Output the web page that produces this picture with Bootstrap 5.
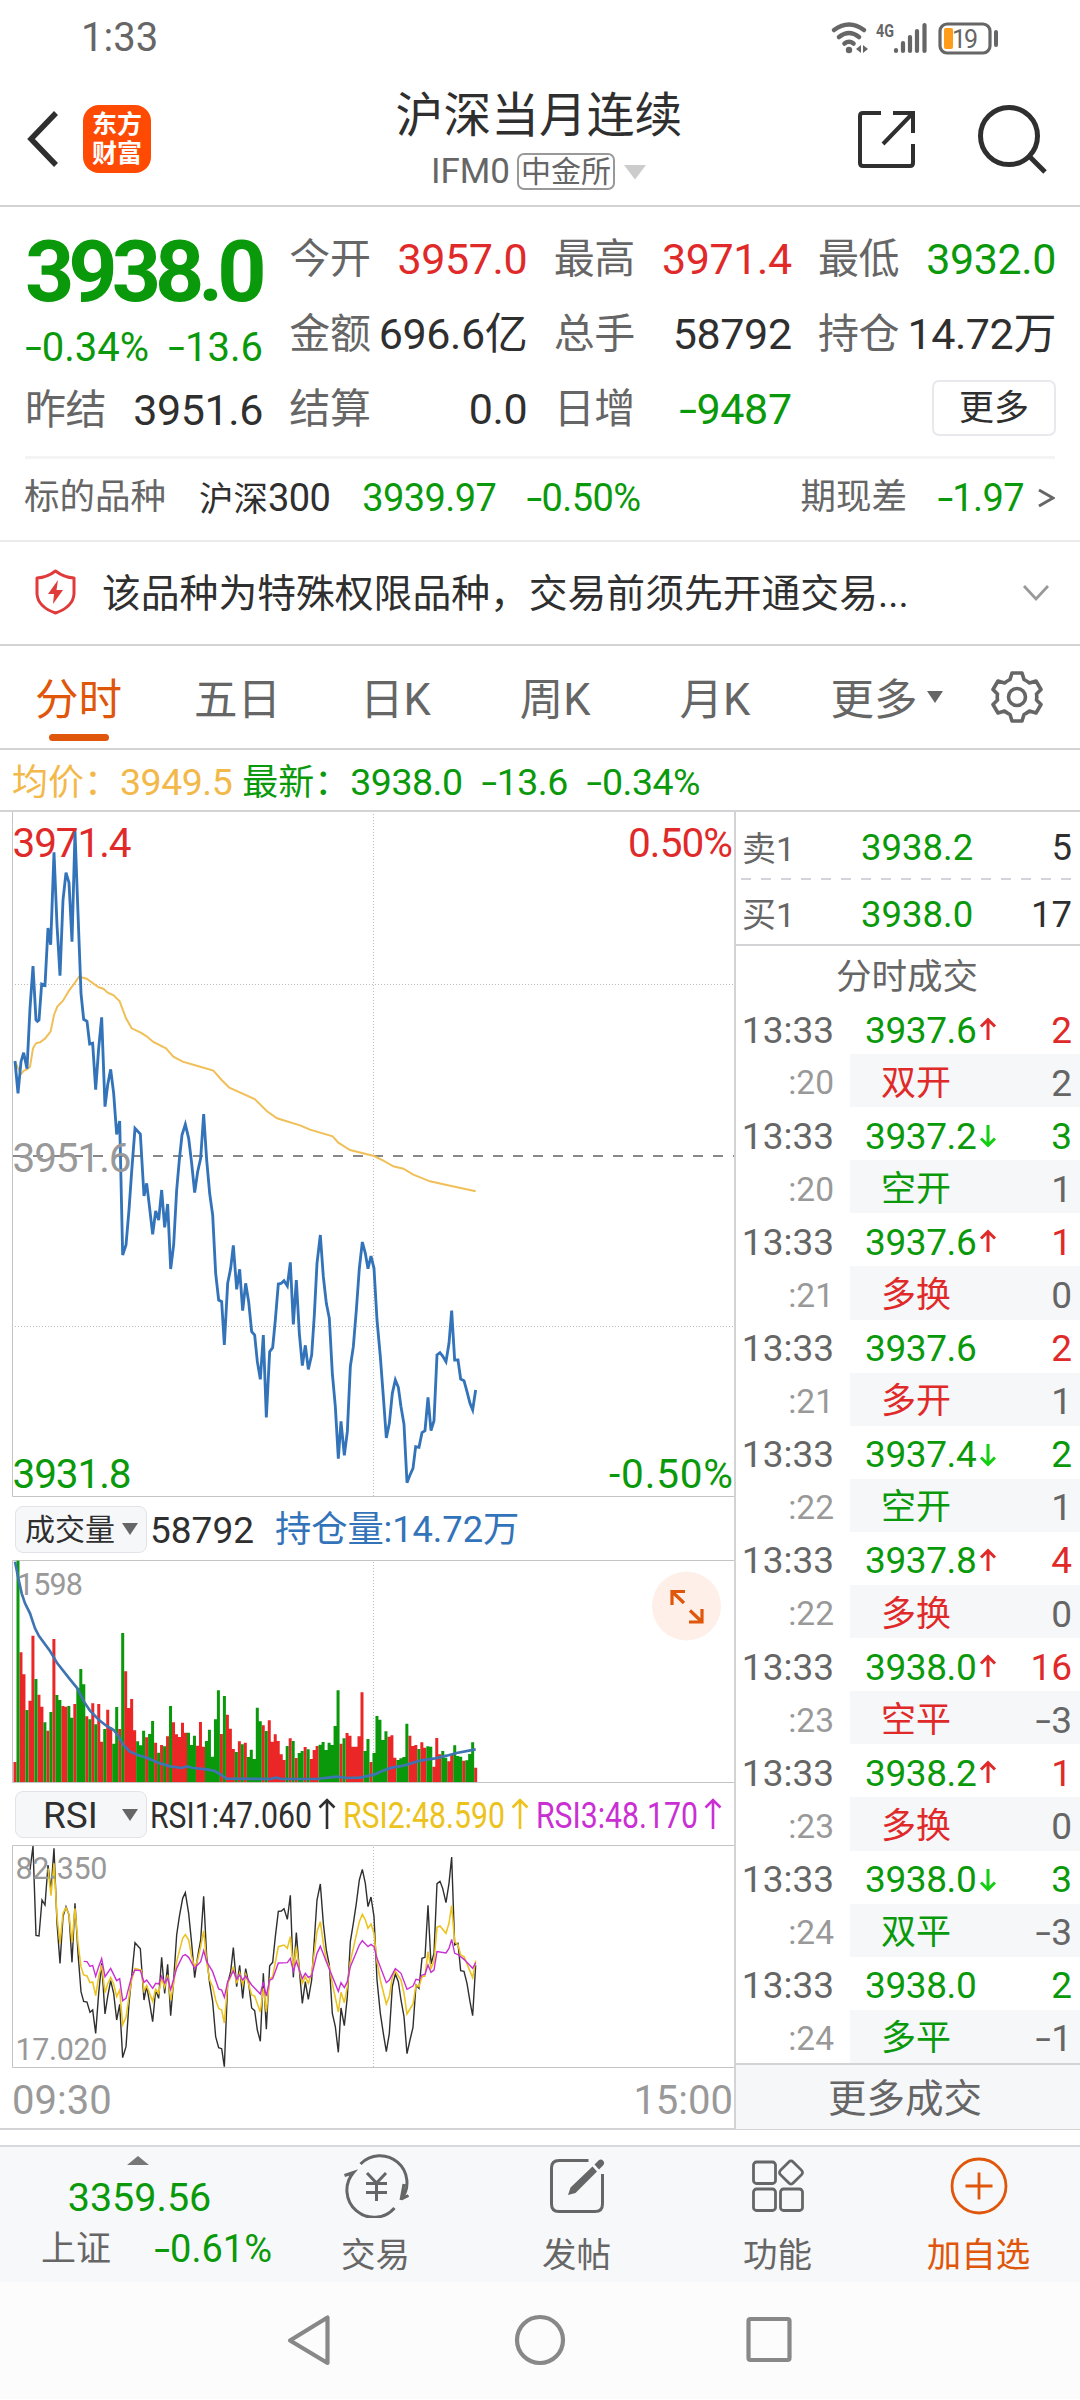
<!DOCTYPE html>
<html lang="zh-CN">
<head>
<meta charset="utf-8">
<title>沪深当月连续 IFM0</title>
<meta name="viewport" content="width=1080">
<link href="https://cdn.jsdelivr.net/npm/bootstrap@5.3.0/dist/css/bootstrap.min.css" rel="stylesheet">
<style>
:root{--up:#e02a2a;--down:#0a990a;--ink:#2f2f2f;--dim:#666;--pale:#999;--brand:#e0560a;--blue:#3373b9;--rule:#d3d3d6;--soft:#f6f7f9}
body{width:1080px;height:2400px;margin:0;background:#fff;color:var(--ink);font-family:Roboto,"Noto Sans CJK SC",sans-serif;line-height:1;overflow:hidden}
svg{display:block;flex:none}
svg text{font-family:Roboto,"Noto Sans CJK SC",sans-serif}
.c-up{color:var(--up)}.c-down{color:var(--down)}.c-dim{color:var(--dim)}.c-pale{color:var(--pale)}.c-brand{color:var(--brand)}.c-blue{color:var(--blue)}
.rule-b{border-bottom:2px solid var(--rule)}
.ng{display:inline-block;font-style:normal;transform:scaleX(1.5);margin:0 .07em}
.statusbar{height:70px;padding:6px 46px 0 81px;font-size:40px}
.titlebar{height:137px;padding:2px 33px 0 25px}
.brand-tile{width:68px;height:68px;border-radius:16px;background:#ff4a03;color:#fff;font-size:25px;font-weight:700;line-height:29px;margin-left:25px;padding-top:1px}
.title-main{font-size:47.8px;height:66px;line-height:63px}
.title-sub{font-size:35px;height:42px}
.exch{font-size:30px;border:2px solid #999;border-radius:7px;height:37px;padding:0 2px;margin-left:7px;line-height:33px}
.quote{height:249px;padding:15px 24px 0 25px}
.qcol{width:238px}
.qcell{height:75px;font-size:43px;letter-spacing:-.4px}
.qcell .lab{font-size:41px;color:var(--dim)}
.bigprice{height:100px;font-size:86px;font-weight:700;letter-spacing:-6px}
.delta{height:51px;font-size:40px}
.more-btn{width:124px;height:56px;border:2px solid #e7e9ec;border-radius:7px;font-size:35px;color:var(--ink);padding:0;margin-top:-3px}
.under{height:84px;margin:0 25px;border-top:3px solid #f4f4f5;font-size:38px;padding-bottom:3px;letter-spacing:-.6px}
.under .cn{font-size:35.5px;letter-spacing:0}
.notice{height:106px;padding:0 30px 0 35px;border-top:2px solid #ebebed;font-size:38.8px}
.tabs{height:104px;font-size:43.5px;color:var(--dim)}
.tabs .tab-i{position:relative;height:104px;padding-top:7px}
.tab-i.on{color:var(--brand)}
.tab-i.on::after{content:"";position:absolute;left:14px;width:60px;top:89px;height:7px;border-radius:4px;background:var(--brand)}
.avgline{height:62px;padding:5px 0 0 12px;font-size:37.5px;letter-spacing:-.5px}
.avgline .cn{font-size:36px;letter-spacing:0}
.charts{width:734px}
.pane-head{padding-left:15px}
.pill{width:132px;height:47px;background:#f6f7f9;border:1.5px solid #e1e3e8;border-radius:8px;padding:0 8px 0 9px;margin-top:1px}
.side{width:346px;border-left:2px solid var(--rule)}
.book{font-size:36.5px;height:66px;padding:0 8px 0 6px}
.book .cn{font-size:34px;width:119px}
.dash{height:2px;margin:0 8px 0 5px;background:repeating-linear-gradient(90deg,#d3d3d9 0 10px,transparent 10px 20px)}
.tick{height:53.1px;font-size:37px}
.tick .tm{width:114px;padding:5px 16px 0 0}
.tick .px{width:230px;height:53.1px;padding:5px 8px 0 15px}
.tick .val{letter-spacing:-.4px;margin-right:3px}
.tick.sub .px{background:var(--soft);padding-left:31px}
.tick.sub .tm{font-size:33.5px}
.tick.sub .cn{font-size:35px}
.more-trades{height:66px;background:var(--soft);border-top:2px solid var(--rule);font-size:38.5px;padding:4px 6px 0 0}
.dock{height:137px;background:#f7f8fa;border-top:2px solid #d5d8dc}
.dock-i{width:201px;font-size:34.5px}
.nav-sys{height:117px;background:#fcfcfc}
</style>
<script src="https://cdn.jsdelivr.net/npm/bootstrap@5.3.0/dist/js/bootstrap.bundle.min.js"></script>
</head>
<body class="d-flex flex-column">

<div class="statusbar d-flex align-items-center justify-content-between c-dim">
  <span>1:33</span>
  <svg width="204" height="64" viewBox="830 4 204 64" fill="none" stroke="#666">
    <g stroke-width="4.6" stroke-linecap="round"><path d="M834 28Q849 17 864 28M839 35Q849 27 859 35M844.500 41.500Q849 38 853.500 41.500"/></g>
    <circle cx="849" cy="48" r="3.200" fill="#666" stroke="none"/>
    <path d="M861 43v8l-5-4zM863 43v8l5-4z" fill="#666" stroke="none"/>
    <text x="876" y="34.500" font-size="18" font-weight="700" fill="#666" stroke="none" textLength="18" lengthAdjust="spacingAndGlyphs">4G</text>
    <path stroke-width="4.200" stroke-linecap="round" d="M896 48v1M903 41v8M910 35v14M917 29v20M924.500 23v26"/>
    <rect x="940" y="22" width="50" height="29" rx="7" stroke-width="3.200"/>
    <rect x="944" y="26" width="9" height="21" rx="2" fill="#ff9c1a" stroke="none"/>
    <text x="952" y="45.500" font-size="25" fill="#666" stroke="none" textLength="26">19</text>
    <path stroke-width="4" stroke-linecap="round" d="M996 30v13"/>
  </svg>
</div>

<div class="titlebar rule-b d-flex align-items-center justify-content-between">
  <div class="d-flex align-items-center" style="width:260px">
    <svg width="33" height="58" viewBox="0 0 33 58" fill="none" stroke="#2f2f2f" stroke-width="5.500"><path d="M31 3L6 29L31 55"/></svg>
    <div class="brand-tile d-flex flex-column align-items-center justify-content-center"><span>东方</span><span>财富</span></div>
  </div>
  <div class="d-flex flex-column align-items-center">
    <div class="title-main">沪深当月连续</div>
    <div class="title-sub d-flex align-items-center c-dim"><span>IFM0</span><span class="exch">中金所</span>
      <svg class="ms-2" width="24" height="16" viewBox="0 0 24 16"><path d="M1 1H23L12 15.500z" fill="#ccc"/></svg></div>
  </div>
  <div class="d-flex align-items-center justify-content-end" style="width:254px">
    <svg width="190" height="76" viewBox="857 101 190 76" fill="none" stroke="#2f2f2f" stroke-width="4">
      <path d="M881 113H863Q860 113 860 116V163Q860 166 863 166H910Q913 166 913 163V144M893 113H913V133M912 114L883 144"/>
      <circle cx="1009" cy="136" r="28.500" stroke-width="5"/><path stroke-width="5" d="M1029 156L1045 172"/>
    </svg>
  </div>
</div>

<div class="quote d-flex justify-content-between">
  <div class="qcol">
    <div class="bigprice d-flex align-items-center c-down">3938.0</div>
    <div class="delta d-flex align-items-center justify-content-between c-down"><span><i class="ng">-</i>0.34%</span><span><i class="ng">-</i>13.6</span></div>
    <div class="qcell d-flex align-items-center justify-content-between"><span class="lab">昨结</span><span>3951.6</span></div>
  </div>
  <div class="qcol">
    <div class="qcell d-flex align-items-center justify-content-between"><span class="lab">今开</span><span class="c-up">3957.0</span></div>
    <div class="qcell d-flex align-items-center justify-content-between"><span class="lab">金额</span><span>696.6亿</span></div>
    <div class="qcell d-flex align-items-center justify-content-between"><span class="lab">结算</span><span>0.0</span></div>
  </div>
  <div class="qcol">
    <div class="qcell d-flex align-items-center justify-content-between"><span class="lab">最高</span><span class="c-up">3971.4</span></div>
    <div class="qcell d-flex align-items-center justify-content-between"><span class="lab">总手</span><span>58792</span></div>
    <div class="qcell d-flex align-items-center justify-content-between"><span class="lab">日增</span><span class="c-down"><i class="ng">-</i>9487</span></div>
  </div>
  <div class="qcol">
    <div class="qcell d-flex align-items-center justify-content-between"><span class="lab">最低</span><span class="c-down">3932.0</span></div>
    <div class="qcell d-flex align-items-center justify-content-between"><span class="lab">持仓</span><span>14.72万</span></div>
    <div class="qcell d-flex align-items-center justify-content-end"><button class="btn more-btn lh-1">更多</button></div>
  </div>
</div>

<div class="under d-flex align-items-center">
  <span class="cn c-dim" style="margin-left:-1px">标的品种</span>
  <span style="margin-left:33px"><span class="cn" style="font-size:34.500px">沪深</span>300</span>
  <span class="c-down" style="margin-left:32px">3939.97</span>
  <span class="c-down" style="margin-left:30px"><i class="ng">-</i>0.50%</span>
  <span class="cn c-dim ms-auto">期现差</span>
  <span class="c-down" style="margin-left:30px"><i class="ng">-</i>1.97</span>
  <svg style="margin-left:13px" width="18" height="26" viewBox="0 0 18 26" fill="none" stroke="#666" stroke-width="3"><path d="M2 5L16 13L2 21"/></svg>
</div>

<div class="notice rule-b d-flex align-items-center">
  <svg style="margin-bottom:2px" width="41" height="46" viewBox="0 0 41 46" fill="none" stroke="#e03a3a" stroke-width="3"><path d="M20.500 2Q29 8.500 39 9V25Q38 38 20.500 44Q3 38 2 25V9Q12 8.500 20.500 2Z" stroke-linejoin="round"/><path d="M23 11L13 25H19L18 35L28 21H21.500Z" fill="#e03a3a" stroke="none"/></svg>
  <span style="margin-left:26px;padding-top:2px">该品种为特殊权限品种，交易前须先开通交易...</span>
  <svg class="ms-auto" width="28" height="18" viewBox="0 0 28 18" fill="none" stroke="#999" stroke-width="2.800"><path d="M2 2L14 15L26 2"/></svg>
</div>

<div class="tabs rule-b d-flex align-items-center">
  <div class="tab-i on d-flex align-items-center" style="margin-left:35px">分时</div>
  <div class="tab-i d-flex align-items-center" style="margin-left:72px">五日</div>
  <div class="tab-i d-flex align-items-center" style="margin-left:79px">日K</div>
  <div class="tab-i d-flex align-items-center" style="margin-left:89px">周K</div>
  <div class="tab-i d-flex align-items-center" style="margin-left:89px">月K</div>
  <div class="tab-i d-flex align-items-center" style="margin-left:80px">更多<svg style="margin:0 0 7px 10px" width="16" height="12" viewBox="0 0 16 12"><path d="M0 0H16L8 12z" fill="#666"/></svg></div>
  <svg style="margin-left:46px" width="56" height="56" viewBox="-28 -28 56 56" fill="none" stroke="#666" stroke-width="3.600" stroke-linejoin="round"><path d="M-5 -24H5L7 -17.500Q10 -16 12.500 -14L19 -16L24 -7.500L19.500 -3Q20 0 19.500 3L24 7.500L19 16L12.500 14Q10 16 7 17.500L5 24H-5L-7 17.500Q-10 16 -12.500 14L-19 16L-24 7.500L-19.500 3Q-20 0 -19.500 -3L-24 -7.500L-19 -16L-12.500 -14Q-10 -16 -7 -17.500Z"/><circle r="8.500"/></svg>
</div>

<div class="avgline rule-b d-flex align-items-center">
  <span class="cn" style="color:#f2b94a">均价：</span><span style="color:#f2b94a;margin-left:0">3949.5</span>
  <span class="cn c-down" style="margin-left:10px">最新：</span><span class="c-down">3938.0</span>
  <span class="c-down" style="margin-left:19px"><i class="ng">-</i>13.6</span>
  <span class="c-down" style="margin-left:19px"><i class="ng">-</i>0.34%</span>
</div>

<div class="d-flex rule-b" style="height:1318px">
  <div class="charts">
    <svg width="734" height="685" viewBox="0 812 734 685" fill="none">
      <path d="M12.500 812V1496.500H734" stroke="#c4c4c4"/>
      <path d="M373.500 814V1496M15 984.500H734M15 1326.500H734" stroke="#bbb" stroke-dasharray="1 2"/>
      <path d="M13 1156H734" stroke="#888" stroke-width="2" stroke-dasharray="10 10"/>
      <g font-size="40.500">
        <text x="12.500" y="856.500" fill="#e02a2a" textLength="119">3971.4</text>
        <text x="628" y="856.500" fill="#e02a2a" textLength="105">0.50%</text>
        <text x="12.500" y="1487.500" fill="#0a990a" textLength="119">3931.8</text>
        <text x="609" y="1487.500" fill="#0a990a" textLength="124">-0.50%</text>
      </g>
      <g transform="translate(0 800) scale(.33333)">
        <polyline stroke="#f0bf58" stroke-width="6" points="45,785 63,822 72,812 81,808 90,800 99,745 108,730 120,727 135,716 152,694 162,645 172,620 189,602 207,572 225,548 237,530 260,536 296,562 310,566 323,578 341,586 359,604 378,655 395,685 421,697 440,709 460,726 498,745 520,770 548,785 593,798 640,812 665,840 688,863 764,897 800,933 831,955 900,976 930,989 998,1009 1015,1028 1050,1050 1122,1068 1150,1082 1180,1099 1210,1106 1240,1124 1290,1144 1340,1155 1427,1174"/>
        <polyline stroke="#3373b9" stroke-width="8.500" points="45,783 54,880 63,785 71,758 81,806 90,625 99,498 108,660 112,664 117,660 125,552 135,556 144,384 152,434 162,157 171,375 180,527 189,300 198,218 207,248 216,425 225,95 234,340 243,580 251,658 261,664 269,732 278,730 287,869 296,745 305,652 315,920 323,855 332,808 341,880 350,1003 359,963 368,1365 378,1335 387,1230 395,1115 405,985 421,1002 432,1188 440,1150 449,1225 458,1303 467,1233 476,1260 485,1170 494,1282 503,1212 512,1407 521,1335 530,1170 538,1080 546,1005 556,973 566,1015 575,1090 584,1178 593,1115 602,1075 611,942 620,1080 629,1180 638,1245 647,1420 656,1500 665,1505 673,1635 683,1450 692,1405 700,1336 710,1468 719,1408 728,1532 737,1450 746,1505 755,1595 764,1605 772,1685 781,1738 790,1605 799,1852 809,1655 818,1643 826,1560 835,1452 844,1450 852,1442 862,1458 871,1387 880,1573 889,1440 898,1600 907,1697 916,1636 925,1708 935,1665 943,1545 951,1390 961,1305 970,1430 979,1510 988,1555 997,1720 1006,1820 1015,1976 1023,1864 1033,1966 1042,1895 1051,1700 1060,1640 1069,1530 1078,1405 1087,1326 1096,1360 1104,1406 1113,1368 1122,1405 1131,1560 1141,1670 1150,1790 1159,1914 1168,1870 1177,1780 1186,1740 1195,1762 1203,1820 1212,1873 1221,2048 1230,2025 1239,2005 1247,1940 1257,1942 1266,1898 1275,1892 1284,1792 1293,1892 1302,1862 1311,1665 1320,1658 1328,1668 1338,1685 1347,1630 1355,1532 1364,1680 1374,1680 1382,1737 1392,1742 1401,1775 1410,1810 1418,1830 1427,1770"/>
      </g>
      <text x="12.500" y="1171.500" fill="#999" font-size="40.500" textLength="119">3951.6</text>
    </svg>

    <div class="pane-head d-flex align-items-center" style="height:63px">
      <div class="pill d-flex align-items-center justify-content-between"><span style="font-size:30px;padding-top:2px">成交量</span><svg width="16" height="12" viewBox="0 0 16 12"><path d="M0 0H16L8 12z" fill="#666"/></svg></div>
      <span style="font-size:37px;margin-left:3px;padding-top:3px">58792</span>
      <span class="c-blue" style="font-size:36.300px;margin-left:21px;padding-top:3px;letter-spacing:-.1px">持仓量:14.72万</span>
    </div>

    <svg width="734" height="223" viewBox="0 1560 734 223" fill="none">
      <path d="M734 1560.500H12.500V1782.500H734" stroke="#c4c4c4"/>
      <path d="M373.500 1562V1782" stroke="#bbb" stroke-dasharray="1 2"/>
      <g transform="translate(0 1490) scale(.33333)">
        <path id="volUp" stroke="#ea2626" stroke-width="9"/>
        <path id="volDown" stroke="#0a990a" stroke-width="9"/>
      </g>
      <text x="17" y="1594.500" fill="#999" font-size="30.500" textLength="66">1598</text>
      <polyline transform="translate(0 1490) scale(.33333)" stroke="#3f74b3" stroke-width="8" points="45,215 55,265 65,310 75,340 90,370 105,415 117,438 150,483 172,520 210,568 232,595 252,635 270,662 297,690 320,708 341,720 355,738 370,765 390,785 415,796 440,803 475,818 510,829 545,834 560,829 580,834 620,838 645,843 660,852 680,866 810,867 828,863 845,867 950,867 1010,860 1040,864 1080,863 1122,854 1145,844 1175,833 1210,827 1260,812 1305,805 1340,797 1370,789 1427,778"/>
      <circle cx="686.500" cy="1606" r="34.500" fill="#fef0e9"/>
      <path stroke="#e0560a" stroke-width="3.200" d="M685 1591.500H672V1605M672.500 1592L684 1603M689 1622H702V1609M701.500 1621.500L690 1610.500"/>
    </svg>

    <div class="pane-head d-flex align-items-center" style="height:62px">
      <div class="pill d-flex align-items-center justify-content-between" style="padding-left:27px"><span style="font-size:37px;padding-top:1px">RSI</span><svg width="16" height="12" viewBox="0 0 16 12"><path d="M0 0H16L8 12z" fill="#666"/></svg></div>
      <svg style="margin-left:1px;overflow:visible" width="586" height="62" viewBox="148 1783 586 62" font-size="37.500">
        <text x="150" y="1827.500" fill="#2f2f2f" textLength="162" lengthAdjust="spacingAndGlyphs">RSI1:47.060</text>
        <text x="343" y="1827.500" fill="#ecc21c" textLength="162" lengthAdjust="spacingAndGlyphs">RSI2:48.590</text>
        <text x="536" y="1827.500" fill="#c92fd3" textLength="162" lengthAdjust="spacingAndGlyphs">RSI3:48.170</text>
        <g fill="none" stroke-width="2.600"><path stroke="#2f2f2f" d="M327 1829V1800M319.500 1807.500L327 1800L334.500 1807.500"/><path stroke="#ecc21c" d="M520 1829V1800M512.500 1807.500L520 1800L527.500 1807.500"/><path stroke="#c92fd3" d="M713 1829V1800M705.500 1807.500L713 1800L720.500 1807.500"/></g>
      </svg>
    </div>

    <svg width="734" height="223" viewBox="0 1845 734 223" fill="none">
      <path d="M734 1845.500H12.500V2067.500H734" stroke="#c4c4c4"/>
      <path d="M373.500 1847V2067" stroke="#bbb" stroke-dasharray="1 2"/>
      <g transform="translate(0 1780) scale(.33333)" stroke-width="4.200">
        <polyline stroke="#2f2f2f" points="90,270 99,198 108,466 117,468 126,360 135,375 144,255 153,330 162,205 171,430 180,550 189,410 198,380 207,405 216,547 225,370 234,520 243,635 251,664 261,666 270,697 278,690 287,760 296,640 305,550 315,702 323,650 332,602 341,640 350,720 359,673 368,833 378,800 387,670 395,590 405,488 421,506 432,660 440,618 449,670 458,725 467,630 476,655 485,532 494,640 503,553 512,707 521,600 530,465 538,410 548,355 556,338 566,400 575,490 584,593 593,530 602,480 611,349 620,530 629,610 638,665 647,770 656,803 665,806 673,860 683,610 692,575 700,503 710,620 719,556 728,655 737,566 746,610 755,684 764,692 772,750 781,784 790,580 799,748 809,557 818,547 826,470 835,394 844,393 852,386 862,418 871,346 880,592 889,458 898,570 907,670 916,605 925,658 935,600 943,480 951,360 961,312 970,430 979,510 988,555 997,700 1006,740 1015,817 1023,684 1033,737 1042,650 1051,485 1060,430 1069,370 1078,300 1087,268 1096,310 1104,380 1113,351 1122,410 1131,600 1141,700 1150,760 1159,815 1168,760 1177,620 1186,582 1195,605 1203,660 1212,710 1221,821 1230,780 1239,742 1248,615 1257,625 1266,535 1275,532 1284,376 1293,552 1302,520 1311,311 1320,304 1328,325 1338,368 1347,310 1355,231 1364,495 1374,490 1382,572 1392,574 1401,610 1410,665 1418,707 1427,556"/>
        <polyline stroke="#ecc21c" stroke-width="4.600" points="144,265 153,347 162,250 171,410 180,490 189,400 198,383 207,403 216,487 225,385 234,490 243,560 251,585 261,588 270,608 278,606 287,647 296,590 305,556 315,638 323,612 332,592 341,612 350,650 359,630 368,734 378,712 387,650 395,600 405,565 424,570 432,632 440,617 458,664 467,628 476,640 485,595 494,622 503,585 512,661 521,610 530,545 548,475 556,464 566,480 575,530 584,562 593,540 602,500 611,452 620,545 629,600 638,620 647,660 656,685 665,690 673,729 683,610 692,590 700,560 710,610 719,578 728,614 737,583 755,645 764,648 781,696 790,625 799,696 809,598 818,590 835,500 852,495 862,505 871,470 880,565 889,500 898,570 907,610 916,590 925,610 935,580 951,455 961,425 970,490 979,540 988,560 997,610 1015,696 1023,637 1033,668 1042,620 1051,545 1078,425 1087,403 1096,420 1104,445 1113,432 1122,460 1131,545 1141,600 1159,672 1168,650 1177,590 1186,574 1203,600 1212,640 1221,702 1239,672 1248,615 1257,620 1266,590 1275,588 1284,515 1293,565 1302,545 1311,442 1320,438 1338,460 1347,430 1355,377 1364,485 1374,495 1382,525 1392,530 1418,593 1427,542"/>
        <polyline stroke="#c92fd3" points="251,544 261,545 270,559 278,556 287,589 296,560 305,536 315,590 332,565 350,602 359,596 368,662 378,655 387,620 395,590 405,570 421,572 432,607 440,600 458,625 467,610 476,612 485,589 494,610 503,595 512,629 530,565 548,528 556,524 566,532 584,565 602,545 611,512 620,545 638,575 656,627 665,630 673,652 683,605 700,573 710,598 719,585 728,600 737,588 755,615 781,642 790,606 799,648 809,600 818,596 835,549 862,548 871,535 880,574 889,544 907,596 916,580 925,592 935,587 951,520 961,499 979,545 1015,634 1023,608 1033,623 1042,605 1051,560 1078,495 1087,482 1104,500 1113,493 1122,500 1131,535 1159,608 1168,600 1186,566 1203,580 1221,628 1239,618 1248,598 1257,600 1266,585 1275,583 1284,555 1293,577 1302,570 1311,515 1338,519 1347,505 1355,478 1364,520 1374,524 1392,538 1418,565 1427,548"/>
      </g>
      <g fill="#999" font-size="30.500"><text x="15.500" y="1879" textLength="92">82.350</text><text x="15.500" y="2060" textLength="92">17.020</text></g>
    </svg>

    <div class="d-flex justify-content-between align-items-center c-pale" style="height:60px;padding:6px 1px 0 12px;font-size:40px"><span>09:30</span><span>15:00</span></div>
  </div>

  <div class="side">
    <div class="book d-flex align-items-center" style="padding-top:7px"><span class="cn c-dim">卖1</span><span class="c-down">3938.2</span><span class="ms-auto">5</span></div>
    <div class="dash"></div>
    <div class="book d-flex align-items-center rule-b" style="padding-top:6px"><span class="cn c-dim">买1</span><span class="c-down">3938.0</span><span class="ms-auto">17</span></div>
    <div class="d-flex align-items-center justify-content-center c-dim" style="height:55px;font-size:35.500px;padding:8px 2px 0 0">分时成交</div>
    <div id="ticks"></div>
    <div class="more-trades d-flex align-items-center justify-content-center c-dim">更多成交</div>
  </div>
</div>

<div style="height:15px"></div>

<div class="dock d-flex">
  <div class="d-flex flex-column" style="width:276px">
    <div class="d-flex justify-content-center" style="height:22px;padding-top:9px"><svg width="22" height="9" viewBox="0 0 22 9"><path d="M0 9L11 0L22 9z" fill="#777"/></svg></div>
    <div class="d-flex align-items-center justify-content-center c-down" style="height:58px;font-size:39.500px;padding-left:3px">3359.56</div>
    <div class="d-flex align-items-center justify-content-between" style="height:44px;padding:0 4px 0 41px"><span class="c-dim" style="font-size:35px">上证</span><span class="c-down" style="font-size:38px"><i class="ng">-</i>0.61%</span></div>
  </div>
  <div class="dock-i d-flex flex-column align-items-center c-dim">
    <svg style="margin:7px 2px 0 0" width="70" height="64" viewBox="340 2154 70 64" fill="none" stroke="#666" stroke-width="3"><path d="M359.500 2164A27 27 0 0 1 400.500 2199L407.500 2195.500M400 2200L403 2184M393.500 2208A27 27 0 0 1 352.500 2172.500L343.500 2175.500"/><path d="M366 2173L375.500 2183L385 2173M365 2183.500H386M365 2192.500H386M375.500 2182V2201"/></svg>
    <span style="margin:20px 2px 0 0">交易</span>
  </div>
  <div class="dock-i d-flex flex-column align-items-center c-dim">
    <svg style="margin:7px 1px 0 0" width="64" height="64" viewBox="545 2154 64 64" fill="none" stroke="#666" stroke-width="3"><path d="M588.500 2160.500H559Q551.500 2160.500 551.500 2168V2204Q551.500 2211.500 559 2211.500H595Q602.500 2211.500 602.500 2204V2174"/><path stroke="none" fill="#666" d="M568 2195L570.500 2187.500L592.500 2166.500L597 2171.500L575.500 2193ZM594.500 2164.500L598.500 2160.500Q601 2158.500 603.200 2160.700Q605.200 2163 603 2165.500L599 2169.500Z"/></svg>
    <span style="margin:20px 2px 0 0">发帖</span>
  </div>
  <div class="dock-i d-flex flex-column align-items-center c-dim">
    <svg style="margin:7px 1px 0 0" width="64" height="64" viewBox="746.500 2154 64 64" fill="none" stroke="#666" stroke-width="2.800"><rect x="754" y="2162" width="22" height="21.500" rx="3"/><rect x="754" y="2189" width="22" height="21.500" rx="3"/><rect x="781" y="2189" width="22" height="21.500" rx="3"/><rect x="782.500" y="2163.500" width="18" height="18" rx="3" transform="rotate(45 791.500 2172.500)"/></svg>
    <span style="margin:20px 2px 0 0">功能</span>
  </div>
  <div class="dock-i d-flex flex-column align-items-center c-brand">
    <svg style="margin:7px 1px 0 0" width="64" height="64" viewBox="-32 -32 64 64" fill="none" stroke="#e0560a" stroke-width="2.800"><circle r="27"/><path d="M-13.500 0H13.500M0 -13.500V13.500"/></svg>
    <span style="margin:20px 2px 0 0">加自选</span>
  </div>
</div>

<div class="nav-sys">
  <svg width="1080" height="117" viewBox="0 2283 1080 117" fill="none" stroke="#888" stroke-width="4.200" stroke-linejoin="round"><path d="M327.500 2318.500V2364L290 2341.500Z"/><circle cx="540" cy="2341" r="23"/><rect x="748.500" y="2320" width="41" height="41" rx="2"/></svg>
</div>

<script>
// Minute volume bars: r = rising, g = falling, followed by the top edge of the bar.
const vol = "r816 g212 r487 r553 g660 r632 r437 g567 r614 r650 g697 r722 g666 r447 g615 g630 r648 r650 g648 g683 r642 g595 g537 g583 r679 g688 r640 g703 r642 r755 g717 r659 r712 g761 g651 r717 g429 r544 r654 r627 r721 g754 g766 g722 r742 g732 g693 r758 g788 r765 g769 r739 g648 r697 r733 r741 r698 r728 g728 g765 g737 r767 r696 r770 g753 g719 g800 g688 g601 r732 g618 r674 r716 r777 g786 r754 g763 r758 g801 g779 g807 g653 g694 r706 g723 r691 r755 r733 r753 r793 r810 g768 r745 g753 r804 g789 g783 r771 g778 r807 r780 r768 g764 g756 g780 g758 g765 g708 g601 r761 g745 r729 r737 r770 r770 r739 r607 g783 g747 r816 g789 g678 g689 g750 g724 r740 r736 r803 g810 g805 g801 g701 r737 r768 r765 g777 r757 r773 g769 g770 r830 r744 r793 g783 g803 r814 r793 g766 g798 g800 r812 g811 g792 g757 r833".split(" ");
const d = {r: "", g: ""};
vol.forEach((v, i) => { d[v[0]] += `M${(45 + i * 8.974).toFixed(1)} 876V${v.slice(1)}`; });
document.getElementById("volUp").setAttribute("d", d.r);
document.getElementById("volDown").setAttribute("d", d.g);

// price, direction, size, size colour, seconds, trade kind, kind colour, open interest change
const ticks = [
  ["3937.6","up","2","up",":20","双开","up","2"],
  ["3937.2","down","3","down",":20","空开","down","1"],
  ["3937.6","up","1","up",":21","多换","up","0"],
  ["3937.6","","2","up",":21","多开","up","1"],
  ["3937.4","down","2","down",":22","空开","down","1"],
  ["3937.8","up","4","up",":22","多换","up","0"],
  ["3938.0","up","16","up",":23","空平","up","-3"],
  ["3938.2","up","1","up",":23","多换","up","0"],
  ["3938.0","down","3","down",":24","双平","down","-3"],
  ["3938.0","","2","down",":24","多平","down","-1"]
];
const arrow = {
  up: '<svg width="18" height="26" viewBox="0 0 18 26" fill="none" stroke="#e02a2a" stroke-width="3"><path d="M9 23V3M2 9.500L9 2.500L16 9.500"/></svg>',
  down: '<svg width="18" height="26" viewBox="0 0 18 26" fill="none" stroke="#12cf12" stroke-width="3"><path d="M9 2V22M2 15.500L9 22.500L16 15.500"/></svg>',
  "": ""
};
document.getElementById("ticks").innerHTML = ticks.map(t => `
<div class="tick d-flex align-items-center"><span class="tm text-end c-dim">13:33</span><span class="px d-flex align-items-center"><span class="val c-down">${t[0]}</span>${arrow[t[1]]}<span class="ms-auto c-${t[3]}">${t[2]}</span></span></div>
<div class="tick sub d-flex align-items-center"><span class="tm text-end c-pale">${t[4]}</span><span class="px d-flex align-items-center"><span class="cn c-${t[6]}">${t[5]}</span><span class="ms-auto c-dim">${t[7].replace("-", '<i class="ng">-</i>')}</span></span></div>`).join("");
</script>
</body>
</html>
